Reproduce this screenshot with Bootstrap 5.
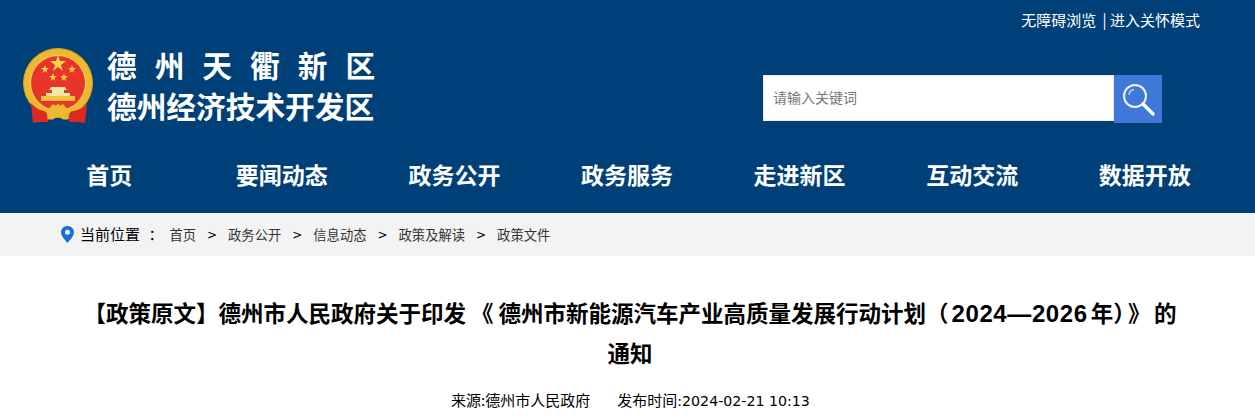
<!DOCTYPE html>
<html lang="zh-CN">
<head>
    <meta charset="UTF-8">
    <meta name="viewport" content="width=device-width, initial-scale=1.0">
    <title>德州天衢新区</title>
    <link href="https://cdn.jsdelivr.net/npm/bootstrap@5.3.2/dist/css/bootstrap.min.css" rel="stylesheet">
    <style>
        body { font-family: "Noto Sans CJK SC", sans-serif; color: #000; overflow-x: hidden; }
        .site-head { background: #004078; height: 213px; padding: 11px 55px 0 23px; }
        .top-links { height: 18px; font-size: 15px; line-height: 18px; color: #fff; }
        .top-links a { color: #fff; text-decoration: none; }
        .top-links a:first-child { margin-right: 3px; }
        .logo-row { height: 100px; margin-top: 18px; }
        .logo-name { margin: -3px 0 0 13px; color: #fff; font-weight: 700; line-height: 41px; white-space: nowrap; font-size: 29.700px; }
        .logo-name .wide { letter-spacing: 18px; margin-right: -18px; }
        .search-box { width: 399px; height: 48px; margin: 28px 38px 0 0; }
        .search-box .form-control { width: 351px; height: 46px; flex: none; border: 1px solid #eee; border-radius: 0; padding: 0 9px 3px; font-size: 14px; }
        .search-box .form-control::placeholder { color: #777; }
        .search-btn { width: 48px; height: 48px; padding: 0; border: 0; border-radius: 0; background: #3f78d8; }
        .main-nav { width: 1208px; margin-top: 10px; }
        .main-nav .nav-link { padding: 0; color: #fff; font-size: 23px; font-weight: 700; line-height: 34px; }
        .crumb-bar { height: 43px; background: #f3f3f3; padding-left: 61px; font-size: 13.300px; color: #333; white-space: nowrap; }
        .crumb-bar .here { font-size: 15px; color: #000; margin: 0 6px 0 6px; }
        .crumb-bar .here i { font-style: normal; margin-left: 5px; }
        .crumb-bar .gt { color: #000; margin: 0 11px; font-family: "DejaVu Sans", sans-serif; font-size: 12px; }
        .doc-title { width: 1100px; margin: 37px 0 0 80px; font-size: 22.500px; font-weight: 700; line-height: 39px; text-align: center; }
        .doc-title .years { font-family: "Liberation Sans", sans-serif; font-size: 24px; letter-spacing: .6px; margin: 0 3px; }
        .doc-title .book-l { margin: 0 5px; }
        .doc-title .book-r { margin: 0 3.500px; }
        .doc-meta { margin: 18px 0 0; padding-left: 6px; font-size: 15px; line-height: 20px; text-align: center; }
        .doc-meta span + span { margin-left: 27px; }
        .doc-meta b { font-family: "DejaVu Sans", sans-serif; font-size: 14.200px; font-weight: 400; }
    </style>
</head>
<body>
<!-- 头部 -->
<header class="site-head">
    <div class="top-links text-end"><a href="#">无障碍浏览</a> | <a href="#">进入关怀模式</a></div>
    <div class="logo-row d-flex justify-content-between">
        <div class="d-flex align-items-start">
            <svg width="71" height="76" viewBox="8 7 71 76" aria-hidden="true">
                <circle cx="43" cy="43" r="34.500" fill="#edb92e" stroke="#d9a126"/>
                <circle cx="43" cy="43" r="27.500" fill="#e8352a" stroke="#f7d766"/>
                <polygon points="43,15 45,21 51,21 46,25 48,31 43,27 38,31 40,25 35,21 41,21" fill="#f8d448"/>
                <polygon points="30,25 31,28 34,28 31.500,30 32.500,33 30,31 27.500,33 28.500,30 26,28 29,28" fill="#f4cf45"/>
                <polygon points="57,25 58,28 61,28 58.500,30 59.500,33 57,31 54.500,33 55.500,30 53,28 56,28" fill="#f4cf45"/>
                <polygon points="38,33 39,36 42,36 39.500,38 40.500,41 38,39 35.500,41 36.500,38 34,36 37,36" fill="#f4cf45"/>
                <polygon points="49,33 50,36 53,36 50.500,38 51.500,41 49,39 46.500,41 47.500,38 45,36 48,36" fill="#f4cf45"/>
                <path d="M36 47 H50 L52 50 H49 V53 H55 V56 H31 V53 H37 V50 H34Z" fill="#f6e7a8"/>
                <rect x="26" y="56" width="34" height="5" fill="#f0c33b"/>
                <path d="M16 63 C21 69 27 71 33 72 L33 82 C27 82 21 82 18 83Z" fill="#dc2a22"/>
                <path d="M72 63 C68 69 60 71 54 72 L54 82 C60 82 66 82 70 83Z" fill="#dc2a22"/>
                <path d="M30 71 C34 70 36 66 38 64 C40 66 42 66 43 63 C44 66 46 66 48 64 C50 66 52 70 56 71 C54 74 53 76 54 79 C50 80 47 80 45 77 H41 C39 80 36 80 32 79 C33 76 32 74 30 71Z" fill="#edb92e"/>
            </svg>
            <div class="logo-name">
                <div class="wide">德州天衢新区</div>
                <div>德州经济技术开发区</div>
            </div>
        </div>
        <div class="search-box d-flex">
            <input type="text" class="form-control" placeholder="请输入关键词">
            <button type="button" class="btn search-btn" aria-label="搜索">
                <svg width="36" height="36" viewBox="0 0 36 36" fill="none" stroke="#eef4ff" aria-hidden="true">
                    <circle cx="15" cy="15" r="11" stroke-width="2"/>
                    <path d="M23 23 L33 33" stroke="#fff" stroke-width="3.500" stroke-linecap="round"/>
                    <path d="M9 14 C9 10.500 11.500 9 14 8.500" stroke="#b9cff2" stroke-width="1.500"/>
                </svg>
            </button>
        </div>
    </div>
    <nav class="nav nav-justified main-nav">
        <a class="nav-link" href="#">首页</a>
        <a class="nav-link" href="#">要闻动态</a>
        <a class="nav-link" href="#">政务公开</a>
        <a class="nav-link" href="#">政务服务</a>
        <a class="nav-link" href="#">走进新区</a>
        <a class="nav-link" href="#">互动交流</a>
        <a class="nav-link" href="#">数据开放</a>
    </nav>
</header>

<!-- 当前位置 -->
<div class="crumb-bar d-flex align-items-center">
    <svg width="13" height="17" viewBox="0 0 13 17" aria-hidden="true">
        <path fill-rule="evenodd" d="M6.500 0 C10.100 0 13 2.800 13 6.300 C13 10.500 8.500 14.500 6.500 17 C4.500 14.500 0 10.500 0 6.300 C0 2.800 2.900 0 6.500 0Z M6.500 3.800 A2.500 2.500 0 1 0 6.500 8.800 A2.500 2.500 0 1 0 6.500 3.800Z" fill="#1a6fd4"/>
    </svg>
    <span class="here">当前位置 <i>：</i></span>
    <span>首页</span><span class="gt">&gt;</span>
    <span>政务公开</span><span class="gt">&gt;</span>
    <span>信息动态</span><span class="gt">&gt;</span>
    <span>政策及解读</span><span class="gt">&gt;</span>
    <span>政策文件</span>
</div>

<!-- 正文 -->
<h1 class="doc-title">【政策原文】德州市人民政府关于印发<span class="book-l">《</span>德州市新能源汽车产业高质量发展行动计划（<span class="years">2024—2026</span>年）<span class="book-r">》</span>的通知</h1>
<p class="doc-meta"><span>来源:德州市人民政府</span><span>发布时间<b>:2024-02-21 10:13</b></span></p>

<script src="https://cdn.jsdelivr.net/npm/bootstrap@5.3.2/dist/js/bootstrap.bundle.min.js"></script>
</body>
</html>
